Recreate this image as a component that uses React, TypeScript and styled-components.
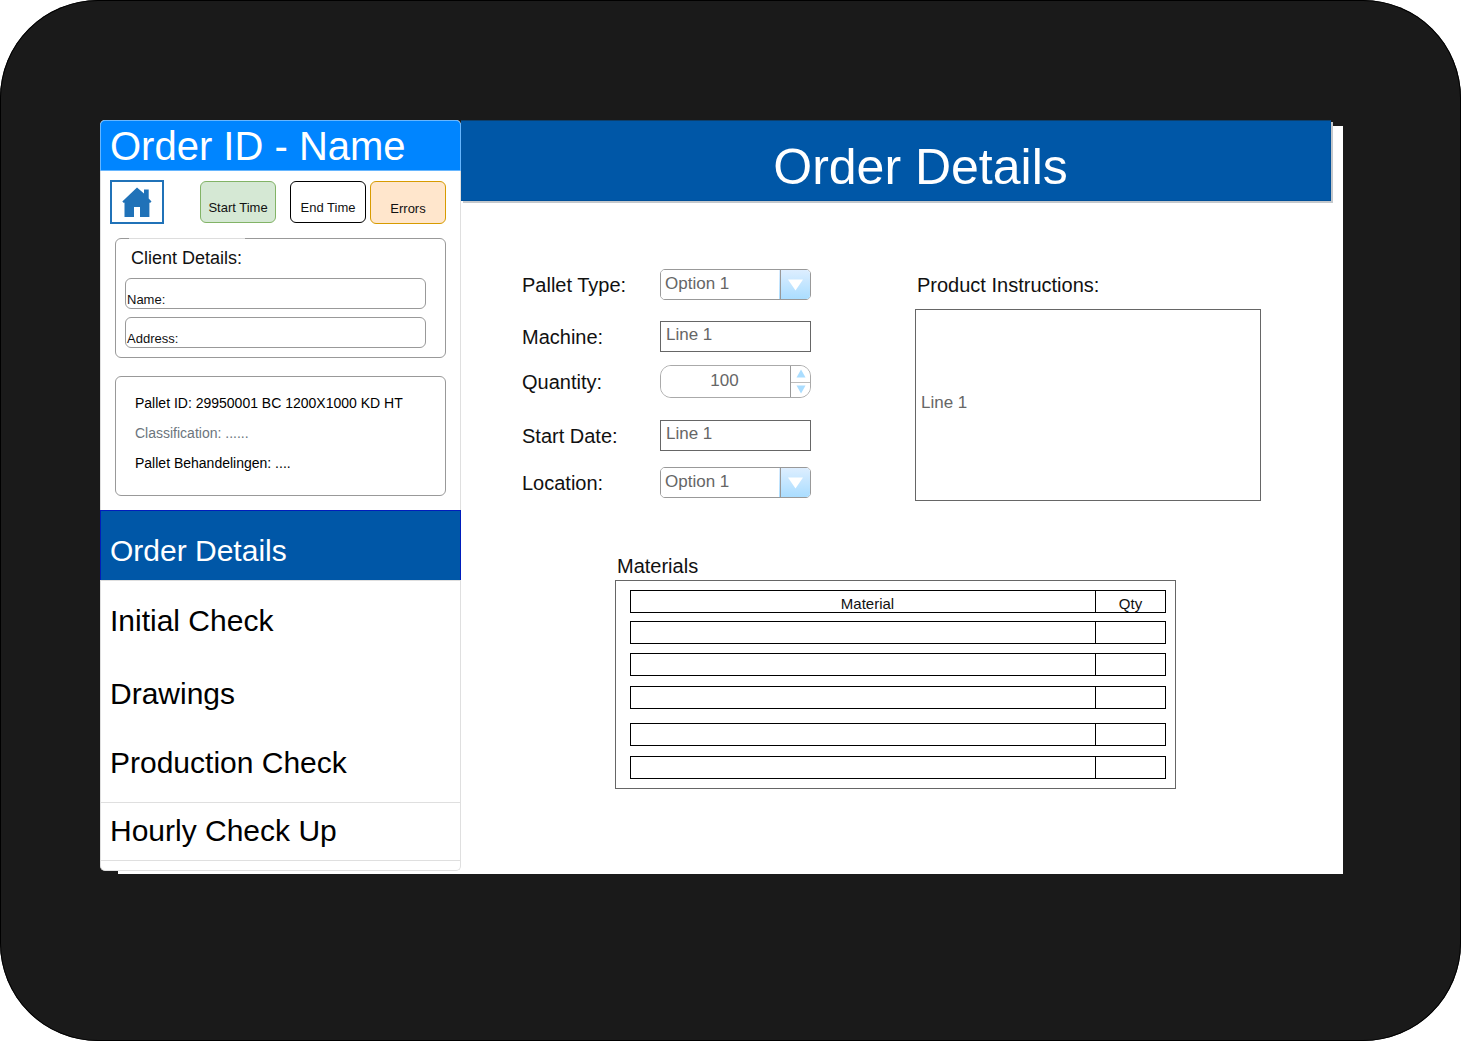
import React from "react";
import styled, { createGlobalStyle, css } from "styled-components";

const GlobalStyle = createGlobalStyle`
  *, *::before, *::after { box-sizing: border-box; }
  body {
    margin: 0;
    background: #fff;
    color: #000;
    font-family: "Liberation Sans", Arial, Helvetica, sans-serif;
  }
  h1, h2, p, ul, fieldset { margin: 0; padding: 0; font-weight: 400; }
  button, input, select, textarea { font: inherit; margin: 0; }
`;

const Device = styled.div`
  min-height: calc(100vh - 1px);
  margin-right: 1px;
  padding: 120px 118px 167px 100px;
  background: #1a1a1a;
  border-radius: 98px;
  box-shadow: inset 0 0 0 1px #000;
`;

const Screen = styled.div`
  display: flex;
  align-items: flex-start;
  padding-bottom: 3px;
  background: linear-gradient(#fff, #fff) 18px 6px / calc(100% - 18px) calc(100% - 6px) no-repeat;
`;

const Sidebar = styled.aside`
  flex: 0 0 361px;
  background: #fff;
  border: 1px solid #dfdfdf;
  border-top: 0;
  border-radius: 5px;
  padding-bottom: 9px;
`;

const OrderTitle = styled.h1`
  height: 51px;
  margin: 0 -1px;
  padding-left: 9px;
  background: #0085ff;
  border: 1px solid #66b6ff;
  border-radius: 5px 5px 0 0;
  color: #fff;
  font-size: 40px;
  line-height: 50px;
`;

const Toolbar = styled.div`
  display: flex;
  align-items: center;
  padding: 9px 14px 14px 9px;
`;

const HomeButton = styled.button`
  width: 54px;
  height: 44px;
  margin-right: auto;
  padding: 0;
  background: #fff;
  border: 2px solid #2072b8;
  color: #2072b8;

  svg { display: block; }
`;

const tones = {
  start: css`background: #d5e8d4; border-color: #82b366;`,
  end: css`background: #fff; border-color: #000; margin: 0 4px 0 14px;`,
  errors: css`height: 43px; padding-top: 13px; background: #ffe6cc; border-color: #d79b00;`,
};

const StatusButton = styled.button<{ $tone: keyof typeof tones }>`
  width: 76px;
  height: 42px;
  padding: 12px 0 0;
  border: 1px solid;
  border-radius: 6px;
  color: #111;
  font-size: 13px;
  line-height: 16px;
  ${(p) => tones[p.$tone]}
`;

const Panel = styled.section`
  height: 120px;
  margin: 0 14px 18px;
  border: 1px solid #999;
  border-radius: 6px;
`;

const PanelTitle = styled.h2`
  width: 116px;
  margin: -1px 0 10px 13px;
  padding: 9px 0 0 2px;
  background: #fff;
  border-top: 1px solid #ddd;
  color: #111;
  font-size: 18px;
  line-height: 20px;
  white-space: nowrap;
`;

const Field = styled.label`
  display: flex;
  align-items: flex-end;
  height: 31px;
  margin: 0 19px 8px 9px;
  padding: 0 1px;
  border: 1px solid #999;
  border-radius: 6px;
  color: #111;
  font-size: 13px;
  line-height: 16px;
`;

const FieldInput = styled.input`
  flex: 1;
  min-width: 0;
  height: 16px;
  padding: 0 4px;
  border: 0;
  outline: 0;
  background: transparent;
`;

const PalletInfo = styled(Panel)`
  margin-bottom: 14px;
  padding: 11px 19px;
  font-size: 14px;
  line-height: 30px;
`;

const InfoLine = styled.p<{ $muted?: boolean }>`
  color: ${(p) => (p.$muted ? "#6c757d" : "#000")};
`;

const NavList = styled.ul`
  margin: 0 -1px;
  list-style: none;
`;

const NavItem = styled.li<{ $top: number; $bottom: number; $lined?: boolean }>`
  a {
    display: block;
    padding: ${(p) => p.$top}px 10px ${(p) => p.$bottom}px;
    color: #000;
    font-size: 30px;
    line-height: 34px;
    text-decoration: none;
    box-shadow: ${(p) => (p.$lined ? "inset 0 1px 0 #dfdfdf, inset 0 -1px 0 #dfdfdf" : "none")};
  }
  a[aria-current="page"] {
    background: #0057a7;
    color: #fff;
    box-shadow: inset 1px 0 #001dbc, inset -1px 0 #001dbc, inset 0 1px #001dbc, 0 1px #dfdfdf;
  }
`;

const Main = styled.main`
  flex: 1;
  min-width: 0;
`;

const PageHeader = styled.header`
  height: 81px;
  margin-right: 12px;
  padding: 18px 0 0 50px;
  background: #0057a7;
  border: 1px solid #004f98;
  border-top-color: #0d3f6c;
  border-left: 0;
  box-shadow: 2px 2px 0 #c4c8cc;
  color: #fff;
  text-align: center;

  h1 { font-size: 50px; line-height: 56px; }
`;

const DetailsForm = styled.form`
  display: flex;
  gap: 104px;
  padding: 68px 82px 53px 61px;
`;

const Rows = styled.div`
  flex: 0 0 289px;
  min-width: 0;
`;

const Row = styled.div<{ $gap: number }>`
  display: flex;
  align-items: center;
  margin-bottom: ${(p) => p.$gap}px;
`;

const Label = styled.label`
  flex: 0 0 138px;
  color: #111;
  font-size: 20px;
  line-height: 24px;
`;

const SelectBox = styled.div`
  position: relative;
  flex: 1;
  height: 31px;
  border: 1px solid #999;
  border-radius: 5px;
  overflow: hidden;

  svg {
    position: absolute;
    top: 0;
    right: 0;
    pointer-events: none;
  }
`;

const Select = styled.select`
  appearance: none;
  width: 100%;
  height: 29px;
  padding: 0 34px 2px 4px;
  border: 0;
  background: #fff;
  color: #666;
  font-size: 17px;
`;

const TextInput = styled.input`
  flex: 1;
  min-width: 0;
  height: 31px;
  padding: 0 5px 4px;
  border: 1px solid #666;
  background: #fff;
  color: #666;
  font-size: 17px;
`;

const Spinner = styled.div`
  display: flex;
  flex: 1;
  min-width: 0;
  height: 33px;
  border: 1px solid #aaa;
  border-radius: 11px;
  overflow: hidden;
`;

const SpinnerInput = styled.input`
  flex: 1;
  min-width: 0;
  padding: 0 2px 2px 0;
  border: 0;
  background: #fff;
  color: #666;
  font-size: 17px;
  text-align: center;
`;

const Steps = styled.div`
  display: grid;
  grid-template-rows: 1fr 1fr;
  width: 20px;
  border-left: 1px solid #999;
`;

const StepButton = styled.button`
  display: flex;
  align-items: center;
  justify-content: center;
  padding: 0;
  border: 0;
  background: #fff;

  & + & { border-top: 1px solid #bbb; }
`;

const Instructions = styled.div`
  flex: 1;
  min-width: 0;
  padding-top: 4px;

  label { display: block; margin: 0 0 12px 2px; }
`;

const InstructionsText = styled.textarea`
  display: block;
  width: 100%;
  height: 192px;
  padding: 83px 5px 0;
  border: 1px solid #666;
  background: #fff;
  color: #666;
  font-size: 17px;
  line-height: 20px;
  resize: none;
`;

const Materials = styled.section`
  margin: 0 167px 0 154px;

  h2 {
    margin: 0 2px 2px;
    color: #111;
    font-size: 20px;
    line-height: 24px;
  }
`;

const TableFrame = styled.div`
  padding: 9px 9px 9px 14px;
  border: 1px solid #666;
`;

const Table = styled.table`
  display: block;
`;

const TableBody = styled.tbody`
  display: block;
`;

const TableHead = styled.thead`
  display: block;
`;

const TableRow = styled.tr<{ $gap: number }>`
  display: grid;
  grid-template-columns: 1fr 70px;
  height: 23px;
  margin-bottom: ${(p) => p.$gap}px;
  border: 1px solid #000;

  th, td { padding: 0; overflow: hidden; }
  th {
    padding-top: 4px;
    color: #111;
    font-size: 15px;
    font-weight: 400;
    line-height: 18px;
    text-align: center;
  }
  th:first-child { padding-left: 9px; }
  th + th, td + td { border-left: 1px solid #000; }
`;

const navigation = [
  { label: "Order Details", top: 24, bottom: 12, current: true },
  { label: "Initial Check", top: 24, bottom: 15 },
  { label: "Drawings", top: 24, bottom: 23 },
  { label: "Production Check", top: 12, bottom: 22 },
  { label: "Hourly Check Up", top: 12, bottom: 13, lined: true },
];

const materialRowGaps = [9, 10, 14, 10, 0];

function HomeIcon() {
  return (
    <svg width="50" height="40" viewBox="2 2 50 40" aria-hidden="true">
      <path
        fill="currentColor"
        d="M27 7.5 34 13.500V9.5h4.700v9L41.500 21.500l-1.500 1.500-.6-.5V37H30V27h-6v10h-9.500V22.500l-.6.5L12.300 21.500Z"
      />
    </svg>
  );
}

function Dropdown({ id }: { id: string }) {
  return (
    <SelectBox>
      <Select id={id} defaultValue="Option 1">
        <option>Option 1</option>
      </Select>
      <svg width="31" height="29" viewBox="0 0 31 29" aria-hidden="true">
        <defs>
          <linearGradient id={`${id}-fill`} x1="0" y1="0" x2="0" y2="1">
            <stop offset="0" stopColor="#ddeeff" />
            <stop offset="1" stopColor="#aaddff" />
          </linearGradient>
        </defs>
        <rect width="31" height="29" fill={`url(#${id}-fill)`} />
        <path d="M1.500 0V29" stroke="#999" />
        <path d="M9 9.500H24L16.500 20.500Z" fill="#fff" />
      </svg>
    </SelectBox>
  );
}

function Triangle({ up }: { up?: boolean }) {
  return (
    <svg width="10" height="9" viewBox="0 0 10 9" aria-hidden="true">
      <path d={up ? "M5 .5 9.500 8.500H.5Z" : "M.5.5H9.500L5 8.500Z"} fill="#aaddff" />
    </svg>
  );
}

export default function App() {
  const [quantity, setQuantity] = React.useState(100);

  return (
    <>
      <GlobalStyle />
      <Device>
        <Screen>
          <Sidebar>
            <OrderTitle>Order ID - Name</OrderTitle>
            <Toolbar>
              <HomeButton type="button" aria-label="Home">
                <HomeIcon />
              </HomeButton>
              <StatusButton type="button" $tone="start">Start Time</StatusButton>
              <StatusButton type="button" $tone="end">End Time</StatusButton>
              <StatusButton type="button" $tone="errors">Errors</StatusButton>
            </Toolbar>
            <Panel>
              <PanelTitle>Client Details:</PanelTitle>
              <Field>
                Name:
                <FieldInput type="text" />
              </Field>
              <Field>
                Address:
                <FieldInput type="text" />
              </Field>
            </Panel>
            <PalletInfo>
              <InfoLine>Pallet ID: 29950001 BC 1200X1000 KD HT</InfoLine>
              <InfoLine $muted>Classification: ......</InfoLine>
              <InfoLine>Pallet Behandelingen: ....</InfoLine>
            </PalletInfo>
            <nav>
              <NavList>
                {navigation.map((item) => (
                  <NavItem key={item.label} $top={item.top} $bottom={item.bottom} $lined={item.lined}>
                    <a href="#" aria-current={item.current ? "page" : undefined}>
                      {item.label}
                    </a>
                  </NavItem>
                ))}
              </NavList>
            </nav>
          </Sidebar>
          <Main>
            <PageHeader>
              <h1>Order Details</h1>
            </PageHeader>
            <DetailsForm>
              <Rows>
                <Row $gap={21}>
                  <Label htmlFor="pallet-type">Pallet Type:</Label>
                  <Dropdown id="pallet-type" />
                </Row>
                <Row $gap={13}>
                  <Label htmlFor="machine">Machine:</Label>
                  <TextInput id="machine" type="text" defaultValue="Line 1" />
                </Row>
                <Row $gap={22}>
                  <Label htmlFor="quantity">Quantity:</Label>
                  <Spinner>
                    <SpinnerInput
                      id="quantity"
                      type="text"
                      inputMode="numeric"
                      value={quantity}
                      onChange={(e) => setQuantity(Number(e.target.value) || 0)}
                    />
                    <Steps>
                      <StepButton type="button" aria-label="Increase" onClick={() => setQuantity(quantity + 1)}>
                        <Triangle up />
                      </StepButton>
                      <StepButton type="button" aria-label="Decrease" onClick={() => setQuantity(quantity - 1)}>
                        <Triangle />
                      </StepButton>
                    </Steps>
                  </Spinner>
                </Row>
                <Row $gap={16}>
                  <Label htmlFor="start-date">Start Date:</Label>
                  <TextInput id="start-date" type="text" defaultValue="Line 1" />
                </Row>
                <Row $gap={0}>
                  <Label htmlFor="location">Location:</Label>
                  <Dropdown id="location" />
                </Row>
              </Rows>
              <Instructions>
                <Label htmlFor="instructions">Product Instructions:</Label>
                <InstructionsText id="instructions" defaultValue="Line 1" />
              </Instructions>
            </DetailsForm>
            <Materials>
              <h2>Materials</h2>
              <TableFrame>
                <Table>
                  <TableHead>
                    <TableRow $gap={8}>
                      <th scope="col">Material</th>
                      <th scope="col">Qty</th>
                    </TableRow>
                  </TableHead>
                  <TableBody>
                    {materialRowGaps.map((gap, index) => (
                      <TableRow key={index} $gap={gap}>
                        <td />
                        <td />
                      </TableRow>
                    ))}
                  </TableBody>
                </Table>
              </TableFrame>
            </Materials>
          </Main>
        </Screen>
      </Device>
    </>
  );
}
